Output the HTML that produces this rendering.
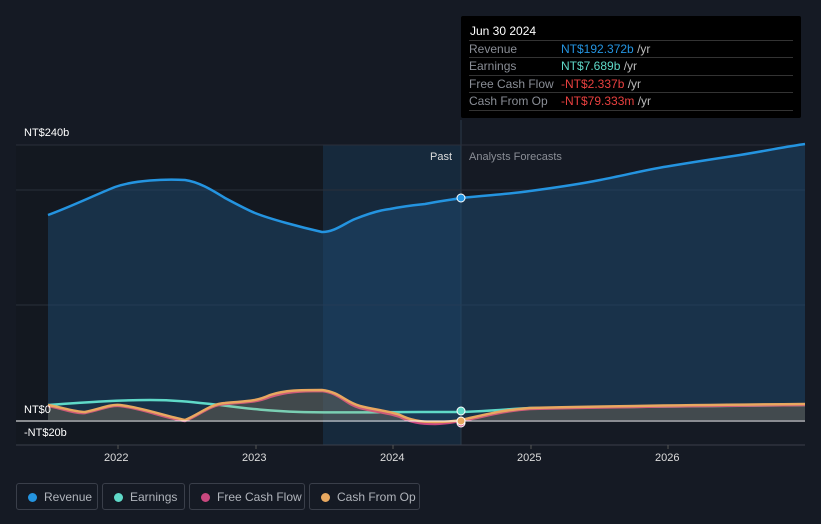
<!DOCTYPE html>
<html><head><style>
body{margin:0;width:821px;height:524px;background:#151a24;font-family:"Liberation Sans",sans-serif;overflow:hidden;position:relative}
.tt{position:absolute;left:461px;top:16px;width:340px;height:102px;background:#000;border-radius:2px}
.tt .h{position:absolute;left:9px;top:8px;color:#fff;font-size:12px}
.row{position:absolute;left:8px;width:324px;border-top:1px solid #333;height:17px;font-size:12px;line-height:17px;color:#8a8e96}
.row span{position:absolute;left:92px}
.lg{position:absolute;top:483px;height:27px;border:1px solid #3a3f4a;border-radius:3px;color:#b0b4bb;font-size:12px;line-height:27px;box-sizing:border-box}
.lg i{position:absolute;left:11px;top:9px;width:9px;height:9px;border-radius:50%}
.lg b{font-weight:normal;position:absolute;left:27px}
</style></head><body>
<svg width="821" height="524" style="position:absolute;left:0;top:0">
<rect x="16" y="145" width="307" height="300" fill="#131820"/>
<rect x="323" y="145" width="138" height="300" fill="#16293c"/>
<line x1="461" y1="120" x2="461" y2="445" stroke="#2a3a4a"/>
<line x1="16" y1="145" x2="805" y2="145" stroke="#2a2f3a"/>
<line x1="16" y1="190" x2="805" y2="190" stroke="#2a2f3a"/>
<line x1="16" y1="305" x2="805" y2="305" stroke="#2a2f3a"/>
<line x1="16" y1="445" x2="805" y2="445" stroke="#3a3f4a"/>
<path d="M48,215 C70,207 95,195 115,187 C135,180 165,179 185,180 C200,182 215,192 225,198 C240,206 250,211 255,213 C270,219 300,227 322,232 C335,232 345,223 355,219 C370,213 380,210 390,209 C405,206 415,205 425,204 C440,201 450,200 461,198 C490,195 510,194 530,191 C560,187 580,184 600,180 C630,174 650,169 670,166 C700,161 720,158 740,155 C770,150 790,146 805,144 L805,420 L48,420 Z" fill="#1d4a70" fill-opacity="0.5"/>
<path d="M48,215 C70,207 95,195 115,187 C135,180 165,179 185,180 C200,182 215,192 225,198 C240,206 250,211 255,213 C270,219 300,227 322,232 C335,232 345,223 355,219 C370,213 380,210 390,209 C405,206 415,205 425,204 C440,201 450,200 461,198 C490,195 510,194 530,191 C560,187 580,184 600,180 C630,174 650,169 670,166 C700,161 720,158 740,155 C770,150 790,146 805,144" fill="none" stroke="#2494e0" stroke-width="2.5"/>
<path d="M48,405 C90,402 120,400 150,400 C180,400 200,403 220,405 C250,409 270,411 300,412 C340,413 380,412 420,412 L461,412 C490,411 510,409 530,408 C600,407 700,406 805,405" fill="none" stroke="#5fd9c8" stroke-width="2.5"/>
<path d="M48,406 C60,408 75,414 85,413 C100,410 110,405 120,406 C140,408 165,418 185,421 C200,415 210,405 225,404 C245,402 255,403 270,397 C285,392 300,391 322,391 C340,393 345,404 360,408 C375,412 390,413 400,417 C410,422 420,424 435,424 C445,424 455,422 461,421 C480,418 500,411 530,409 C600,407 700,406 805,405" fill="none" stroke="#c9487f" stroke-width="2.5"/>
<path d="M48,405 C60,407 75,412 85,412 C100,409 110,404 120,405 C140,407 165,416 185,420 C200,414 210,404 225,403 C245,401 255,402 270,395 C285,390 300,390 322,390 C340,392 345,402 360,406 C375,410 390,411 400,415 C410,420 420,422 435,422 C445,422 455,421 461,420 C480,416 500,410 530,408 C600,406 700,405 805,404 L805,420 L48,420 Z" fill="#e8a860" fill-opacity="0.2"/>
<path d="M48,405 C60,407 75,412 85,412 C100,409 110,404 120,405 C140,407 165,416 185,420 C200,414 210,404 225,403 C245,401 255,402 270,395 C285,390 300,390 322,390 C340,392 345,402 360,406 C375,410 390,411 400,415 C410,420 420,422 435,422 C445,422 455,421 461,420 C480,416 500,410 530,408 C600,406 700,405 805,404" fill="none" stroke="#e8a860" stroke-width="2.5"/>
<line x1="16" y1="421" x2="805" y2="421" stroke="#fff" stroke-width="1"/>
<circle cx="461" cy="198" r="4" fill="#2494e0" stroke="#fff" stroke-width="1"/>
<circle cx="461" cy="411" r="4" fill="#5fd9c8" stroke="#fff" stroke-width="1"/>
<circle cx="461" cy="423" r="4" fill="#c9487f" stroke="#fff" stroke-width="1"/>
<circle cx="461" cy="421" r="4" fill="#e8a860" stroke="#fff" stroke-width="1"/>
<g font-size="11" fill="#fff">
<text x="24" y="136">NT$240b</text>
<text x="24" y="413">NT$0</text>
<text x="24" y="436">-NT$20b</text>
<text x="104" y="461" fill="#ddd">2022</text>
<text x="242" y="461" fill="#ddd">2023</text>
<text x="380" y="461" fill="#ddd">2024</text>
<text x="517" y="461" fill="#ddd">2025</text>
<text x="655" y="461" fill="#ddd">2026</text>
<text x="430" y="160" fill="#ddd">Past</text>
<text x="469" y="160" fill="#8a8e96">Analysts Forecasts</text>
</g>
<g stroke="#555"><line x1="118" y1="445" x2="118" y2="449"/><line x1="256" y1="445" x2="256" y2="449"/><line x1="393" y1="445" x2="393" y2="449"/><line x1="531" y1="445" x2="531" y2="449"/><line x1="668" y1="445" x2="668" y2="449"/></g>
</svg>
<div class="tt"><div class="h">Jun 30 2024</div>
<div class="row" style="top:24px">Revenue<span style="color:#2494e0">NT$192.372b <em style="font-style:normal;color:#bbb">/yr</em></span></div>
<div class="row" style="top:41px">Earnings<span style="color:#5fd9c8">NT$7.689b <em style="font-style:normal;color:#bbb">/yr</em></span></div>
<div class="row" style="top:59px">Free Cash Flow<span style="color:#e8403f">-NT$2.337b <em style="font-style:normal;color:#bbb">/yr</em></span></div>
<div class="row" style="top:76px;border-bottom:1px solid #333">Cash From Op<span style="color:#e8403f">-NT$79.333m <em style="font-style:normal;color:#bbb">/yr</em></span></div>
</div>
<div class="lg" style="left:16px;width:82px"><i style="background:#2494e0"></i><b>Revenue</b></div>
<div class="lg" style="left:102px;width:83px"><i style="background:#5fd9c8"></i><b>Earnings</b></div>
<div class="lg" style="left:189px;width:116px"><i style="background:#c9487f"></i><b>Free Cash Flow</b></div>
<div class="lg" style="left:309px;width:111px"><i style="background:#e8a860"></i><b>Cash From Op</b></div>
</body></html>
